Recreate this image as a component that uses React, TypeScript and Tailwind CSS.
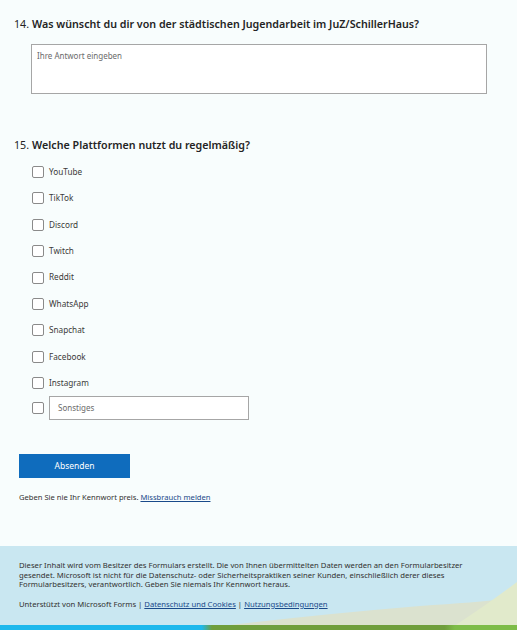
import React from "react";

const platforms = ["YouTube", "TikTok", "Discord", "Twitch", "Reddit", "WhatsApp", "Snapchat", "Facebook", "Instagram"];

function Box() {
  return <span className="block w-[12px] h-[12px] border border-[#8a8a8a] rounded-[2px] bg-white shrink-0" />;
}

export default function App() {
  return (
    <div className="min-h-[630px] flex flex-col bg-[#f8fdfd] text-[#242424]" style={{ fontFamily: '"Noto Sans", "Open Sans", sans-serif' }}>
      <div className="flex-1 pl-[14px] pr-[30px]">
        {/* Question 14 */}
        <div className="pt-[16px]">
          <h2 className="text-[10.7px] leading-[16px]">
            <span className="mr-[3px]">14.</span>
            <span className="font-semibold">Was wünscht du dir von der städtischen Jugendarbeit im JuZ/SchillerHaus?</span>
          </h2>
          <div className="ml-[17px] mt-[12px] h-[50px] border border-[#a6a6a6] bg-white px-[5px] py-[5px] text-[8px] text-[#6b6b6b]">
            Ihre Antwort eingeben
          </div>
        </div>

        {/* Question 15 */}
        <div className="pt-[43px]">
          <h2 className="text-[10.7px] leading-[16px]">
            <span className="mr-[3px]">15.</span>
            <span className="font-semibold">Welche Plattformen nutzt du regelmäßig?</span>
          </h2>
          <div className="ml-[18px] mt-[13px] flex flex-col gap-[14.4px]">
            {platforms.map((p) => (
              <label key={p} className="flex items-center gap-[5px] h-[12px] text-[8.2px] text-[#3b3a39]">
                <Box />
                <span>{p}</span>
              </label>
            ))}
            <div className="flex items-center gap-[5px] -mt-[8px]">
              <Box />
              <div className="w-[200px] h-[24px] border border-[#a6a6a6] bg-white px-[8px] flex items-center text-[8px] text-[#6b6b6b]">
                Sonstiges
              </div>
            </div>
          </div>
        </div>

        {/* Submit */}
        <div className="pt-[31px] pl-[5px]">
          <button className="w-[111px] h-[24px] bg-[#0f6cbd] text-white text-[8.5px]">Absenden</button>
          <p className="mt-[14px] text-[7.6px] text-[#323130]">
            Geben Sie nie Ihr Kennwort preis.{" "}
            <a className="text-[#1a4a8a] underline">Missbrauch melden</a>
          </p>
        </div>
      </div>

      {/* Footer */}
      <footer className="relative mt-[37px] h-[84px] bg-[#c9e7f1] overflow-hidden">
        <svg className="absolute inset-0 w-full h-full" viewBox="0 0 517 84" preserveAspectRatio="none">
          <path d="M190 84 Q300 70 420 60 Q480 56 517 52 L517 84 Z" fill="#dbe2cf" />
          <path d="M448 84 Q485 60 517 36 L517 84 Z" fill="#e1eacb" />
        </svg>
        <div className="relative pl-[19px] pr-[50px] pt-[15px] text-[7.7px] leading-[9.6px] text-[#323130]">
          <p>
            Dieser Inhalt wird vom Besitzer des Formulars erstellt. Die von Ihnen übermittelten Daten werden an den Formularbesitzer gesendet. Microsoft ist nicht für die Datenschutz- oder Sicherheitspraktiken seiner Kunden, einschließlich derer dieses Formularbesitzers, verantwortlich. Geben Sie niemals Ihr Kennwort heraus.
          </p>
          <p className="mt-[10px]">
            Unterstützt von Microsoft Forms |{" "}
            <a className="text-[#1a4a8a] underline">Datenschutz und Cookies</a> |{" "}
            <a className="text-[#1a4a8a] underline">Nutzungsbedingungen</a>
          </p>
        </div>
        <div className="absolute left-0 right-0 bottom-0 h-[5px] bg-[linear-gradient(90deg,#1db8ec_0%,#1db8ec_39%,#6f9e3c_41%,#6f9e3c_86%,#7dbc48_88%,#7dbc48_100%)]" />
      </footer>
    </div>
  );
}
